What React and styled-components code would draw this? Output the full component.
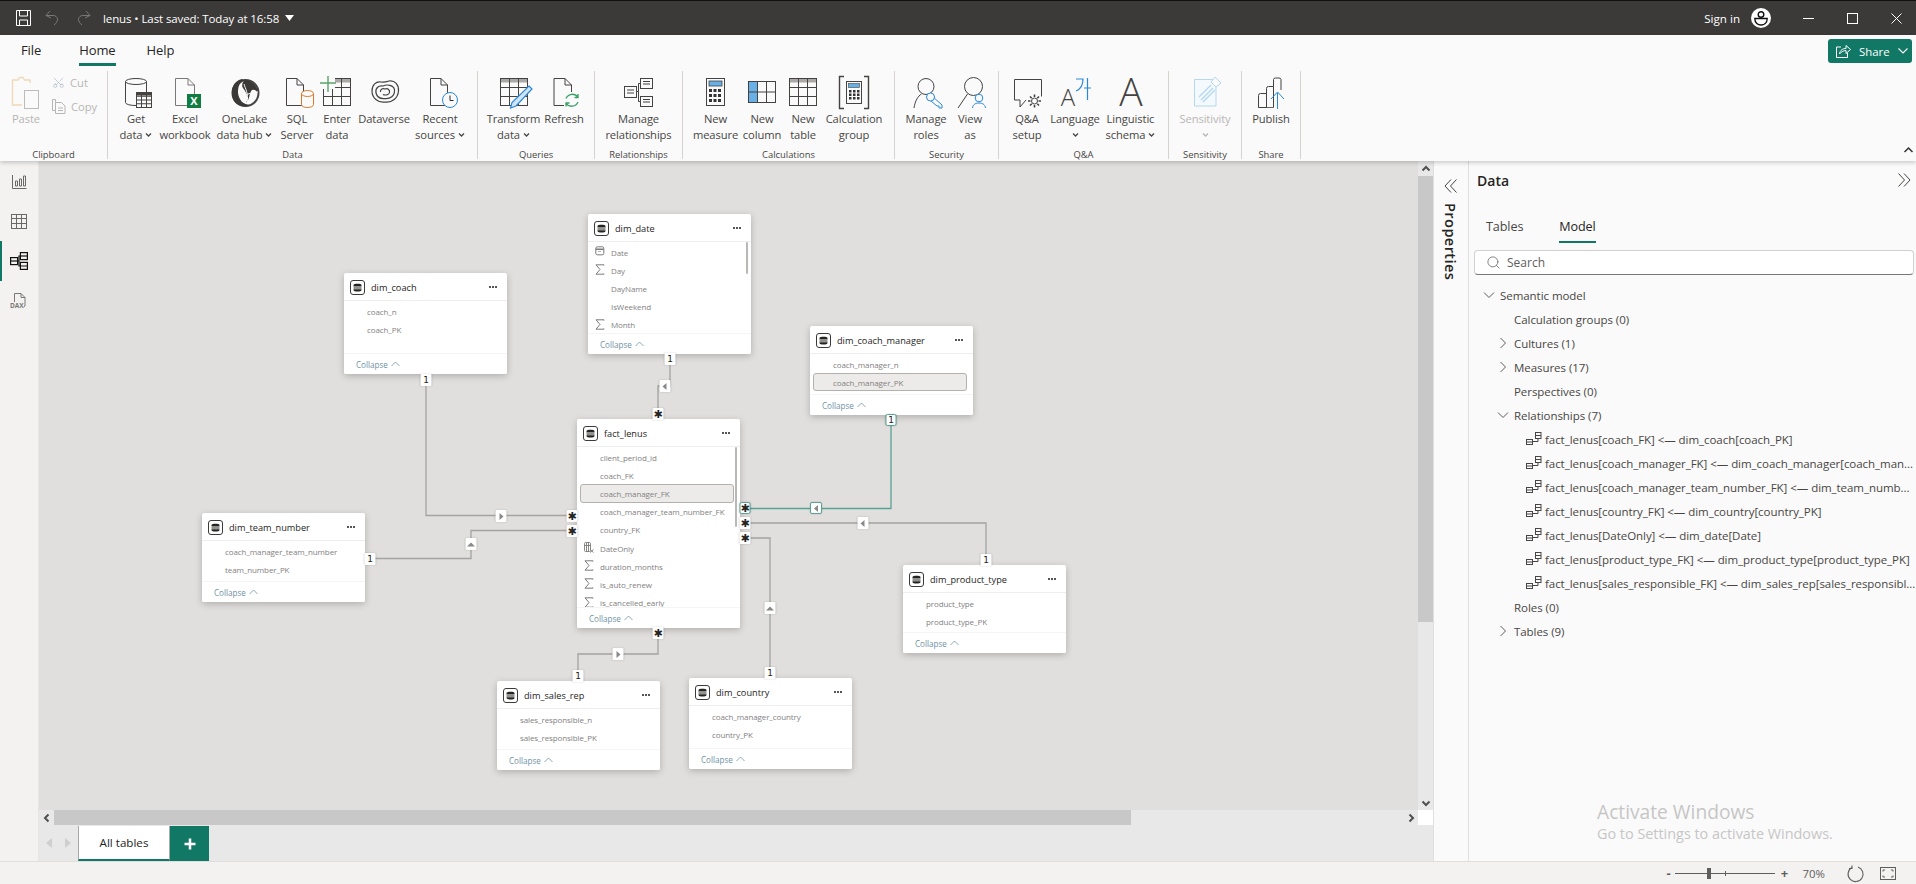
import React from 'react';
import styled, { createGlobalStyle } from 'styled-components';
import { Scissors, Search } from 'lucide-react';

const FONT = '"Open Sans", "Noto Sans", "Liberation Sans", sans-serif';
const GREEN = '#117865';
const ORIGIN_X = 39;
const ORIGIN_Y = 161;

const Global = createGlobalStyle`
  html, body { margin: 0; padding: 0; background: #fafafa; overflow: hidden; }
  * { box-sizing: border-box; }
`;

const Page = styled.div`
  width: 1916px; height: 884px; display: flex; flex-direction: column;
  font-family: ${FONT}; color: #252423; overflow: hidden; position: relative;
`;

/* title bar */
const TitleBar = styled.header`
  height: 35px; flex: none; background: #3b3a39; border-top: 1px solid #111;
  display: flex; align-items: center; color: #fff; padding-left: 15px;
`;
const TitleIcon = styled.span`
  display: flex; width: ${p => p.$w}px; justify-content: center;
`;
const DocTitle = styled.span`
  font-size: 11.5px; margin-left: 11px; white-space: nowrap; letter-spacing: -0.1px;
`;
const TitleRight = styled.div`
  margin-left: auto; margin-right: -2px; display: flex; align-items: center;
`;
const SignIn = styled.span`
  font-size: 11.6px; margin-right: 11px;
`;
const WinBtn = styled.span`
  width: 44px; display: flex; justify-content: center;
`;

/* ribbon */
const Ribbon = styled.section`
  height: 126px; flex: none; background: #fafafa; position: relative; z-index: 5;
  box-shadow: 0 2px 4px rgba(0,0,0,.18);
`;
const TabRow = styled.nav`
  height: 36px; display: flex; padding-left: 21px;
`;
const RibbonTab = styled.span`
  height: 31px; line-height: 31px; font-size: 13px; margin-right: ${p => p.$gap}px;
  color: #252423; border-bottom: ${p => (p.$active ? `3px solid ${GREEN}` : 'none')};
  letter-spacing: -0.1px;
`;
const ShareBtn = styled.span`
  position: absolute; left: 1828px; top: 4px; width: 84px; height: 24px; background: ${GREEN};
  border-radius: 3px; color: #fff; display: flex; align-items: center; font-size: 11.4px;
  padding-left: 8px; gap: 8px;
`;
const RibbonCollapse = styled.span`
  position: absolute; left: 1904px; top: 112px; display: flex;
`;
const Toolbar = styled.div`
  display: flex; height: 88px;
`;
const Group = styled.div`
  width: ${p => p.$w}px; flex: none; border-right: 1px solid #d4d3d1; display: flex; flex-direction: column;
  padding-left: ${p => p.$pad || 0}px;
`;
const GroupBody = styled.div`
  flex: 1; display: flex; min-height: 0;
`;
const GroupLabel = styled.div`
  height: 10px; line-height: 12px; font-size: 9.4px; text-align: center; color: #484644; white-space: nowrap;
  margin-left: ${p => -(p.$pad || 0)}px;
`;
const RButton = styled.div`
  width: ${p => p.$w}px; flex: none; display: flex; flex-direction: column; align-items: center;
  color: ${p => (p.$off ? '#b8b6b4' : '#484644')};
`;
const IconBox = styled.div`
  height: 40px; flex: none; padding-top: 5px; display: flex; justify-content: center;
`;
const RLabel = styled.div`
  font-size: 11.2px; line-height: 16px; text-align: center; white-space: nowrap; letter-spacing: -0.1px;
  display: flex; align-items: center; justify-content: center; gap: 3px; height: 16px;
`;
const SmallCol = styled.div`
  display: flex; flex-direction: column; padding-top: 3px; gap: 8px; margin-left: 0;
`;
const SmallBtn = styled.div`
  display: flex; align-items: center; gap: 5px; font-size: 11.2px; color: #b8b6b4; height: 16px;
`;

/* body */
const Body = styled.main`
  flex: 1; display: flex; min-height: 0;
`;
const LeftNav = styled.aside`
  width: 39px; flex: none; background: #f3f2f1; border-right: 1px solid #e6e5e3;
  display: flex; flex-direction: column;
`;
const NavItem = styled.div`
  height: 40px; display: flex; align-items: center; justify-content: center;
  border-left: 2px solid ${p => (p.$active ? GREEN : 'transparent')}; padding-right: 2px;
`;
const CenterCol = styled.div`
  width: 1394px; flex: none; display: flex; flex-direction: column;
`;
const CanvasRow = styled.div`
  height: 649px; flex: none; display: flex;
`;
const Canvas = styled.div`
  flex: 1; background: #e0dfdd; position: relative; overflow: hidden;
`;
const Links = styled.svg`
  position: absolute; left: 0; top: 0; width: 1378px; height: 649px;
`;
const VScroll = styled.div`
  width: 15px; flex: none; background: #e8e8e8; display: flex; flex-direction: column; align-items: center;
`;
const VBtn = styled.div`
  height: 15px; flex: none; display: flex; align-items: center; justify-content: center;
`;
const VThumb = styled.div`
  height: 446px; width: 100%; background: #c8c8c8; flex: none;
`;
const Spring = styled.div`
  flex: 1;
`;
const HScroll = styled.div`
  height: 15px; flex: none; display: flex; background: #e8e8e8;
`;
const HBtn = styled.div`
  width: 15px; flex: none; display: flex; align-items: center; justify-content: center;
  background: ${p => p.$bg || 'transparent'};
`;
const HThumb = styled.div`
  width: 1077px; background: #c8c8c8; flex: none;
`;
const TabBar = styled.div`
  height: 36px; flex: none; background: #e8e8e8; display: flex; align-items: stretch;
`;
const PagerArrows = styled.div`
  width: 39px; display: flex; align-items: center; justify-content: space-around; padding: 0 2px;
`;
const PageTab = styled.div`
  width: 92px; background: #fff; border-left: 1px solid #a8a8a8; border-right: 1px solid #a8a8a8;
  border-bottom: 2px solid ${GREEN}; font-size: 11.6px; display: flex; align-items: center; justify-content: center;
  margin-top: 1px;
`;
const AddTab = styled.div`
  width: 39px; background: ${GREEN}; display: flex; align-items: center; justify-content: center; margin-top: 1px;
`;

/* properties */
const PropsPane = styled.aside`
  width: 35px; flex: none; background: #fafafa; border-left: 1px solid #e1dfdd;
  display: flex; flex-direction: column; align-items: center; padding-top: 18px;
`;
const PropsTitle = styled.div`
  writing-mode: vertical-rl; font-size: 14.6px; font-weight: 600; color: #252423; margin-top: 10px; letter-spacing: 0.4px;
`;

/* data pane */
const DataPane = styled.aside`
  flex: 1; background: #fafafa; border-left: 1px solid #e1dfdd; position: relative; min-width: 0;
`;
const DataHead = styled.div`
  height: 40px; display: flex; align-items: center; justify-content: space-between; padding: 0 5px 2px 8px;
`;
const DataTitle = styled.h2`
  margin: 0; font-size: 14px; font-weight: 600; color: #252423;
`;
const PaneTabs = styled.div`
  height: 42px; display: flex; align-items: flex-end; padding-left: 17px; gap: 36px;
`;
const PaneTab = styled.span`
  font-size: 12.6px; height: 34px; line-height: 35px; letter-spacing: -0.1px;
  color: ${p => (p.$active ? '#252423' : '#484644')};
  border-bottom: ${p => (p.$active ? `2px solid ${GREEN}` : 'none')};
  font-weight: ${p => (p.$active ? 500 : 400)};
`;
const SearchBox = styled.div`
  margin: 7px 2px 0 5px; height: 25px; background: #fff; border: 1px solid #d1d0ce; border-bottom-color: #777;
  border-radius: 4px; display: flex; align-items: center; padding-left: 11px; gap: 6px;
  font-size: 12px; color: #605e5c;
`;
const Tree = styled.ul`
  list-style: none; margin: 8px 0 0; padding: 0;
`;
const TreeRow = styled.li`
  height: 24px; display: flex; align-items: center; white-space: nowrap; position: relative;
  padding-left: ${p => p.$indent}px; font-size: 11.5px; color: #484644; letter-spacing: -0.05px;
`;
const TreeChevron = styled.span`
  width: 17px; flex: none; display: flex; margin-left: -17px;
`;
const RelIcon = styled.span`
  display: flex; width: 19px; margin-left: -19px; flex: none;
`;
const Watermark = styled.div`
  position: absolute; left: 128px; top: 639px; color: #c6c6c6; pointer-events: none; white-space: nowrap;
`;
const WmBig = styled.div`
  font-size: 19.2px; line-height: 24px;
`;
const WmSmall = styled.div`
  font-size: 14.4px; line-height: 20px;
`;

/* status bar */
const StatusBar = styled.footer`
  height: 23px; flex: none; background: #f3f2f1; border-top: 1px solid #e1dfdd; position: relative;
  display: flex; align-items: center; justify-content: flex-end; padding-right: 20px; color: #605e5c;
`;
const ZoomTrack = styled.div`
  width: 100px; height: 1px; background: #605e5c; position: relative; margin: 0 6px 0 2px;
`;
const ZoomHandle = styled.span`
  position: absolute; left: 32px; top: -5px; width: 4px; height: 11px; background: #605e5c;
`;
const ZoomTick = styled.span`
  position: absolute; left: 50px; top: -2px; width: 1px; height: 5px; background: #605e5c;
`;
const ZoomSign = styled.span`
  font-size: 13px; width: 8px; text-align: center; font-weight: 700;
`;
const ZoomValue = styled.span`
  font-size: 11.4px; margin: 0 22px 0 14px;
`;

/* table cards */
const Card = styled.article`
  position: absolute; left: ${p => p.$x - ORIGIN_X}px; top: ${p => p.$y - ORIGIN_Y}px;
  width: 163px; height: ${p => p.$h}px; background: #fff; border-radius: 2px;
  box-shadow: 0 2px 7px rgba(0,0,0,.22); display: flex; flex-direction: column; overflow: hidden;
`;
const CardHead = styled.div`
  height: 28px; flex: none; display: flex; align-items: center; padding: 1px 8px 0 6px; gap: 6px;
  border-bottom: 1px solid #eeeeee;
`;
const CardIcon = styled.span`
  width: 15px; height: 15px; border: 1px solid #3b3a39; border-radius: 3px; flex: none;
  display: flex; align-items: center; justify-content: center;
`;
const CardTitle = styled.span`
  font-size: 9.2px; color: #252423; flex: 1; white-space: nowrap;
`;
const Dots = styled.span`
  display: flex; gap: 1.5px; margin-right: 2px;
`;
const Dot = styled.i`
  width: 1.6px; height: 1.6px; background: #333; border-radius: 50%;
`;
const Fields = styled.div`
  flex: 1; min-height: 0; overflow: hidden; padding-top: 1px;
`;
const Field = styled.div`
  height: 18.2px; display: flex; align-items: center; white-space: nowrap; font-size: 8px; letter-spacing: -0.1px; color: #83817f;
  position: relative;
  margin: ${p => (p.$selected ? '0 6px 0 3px' : '0')};
  padding-left: ${p => (p.$selected ? 19 : 23)}px;
  ${p => p.$selected && 'background: #ecebe9; border: 1px solid #b3b1ad; border-radius: 3px;'}
`;
const FieldIcon = styled.span`
  position: absolute; left: 7px; top: 3px; display: flex;
`;
const CardFoot = styled.div`
  height: 21px; flex: none; background: #fff; border-top: 1px solid #f5f5f5; display: flex; align-items: center;
  padding-left: 12px; gap: 3px; font-size: 8.1px; color: #7092a6;
`;
const CardThumb = styled.span`
  position: absolute; right: 3px; top: 28px; width: 2.5px; height: ${p => p.$h}px; background: #b9b8b6; border-radius: 2px;
`;
const Tag = styled.span`
  position: absolute; left: ${p => p.$x - ORIGIN_X}px; top: ${p => p.$y - ORIGIN_Y}px;
  transform: translate(-50%, -50%); width: ${p => p.$w || 11}px; height: 12px; background: #fff;
  display: flex; align-items: center; justify-content: center; font-size: ${p => p.$fs || 9}px; line-height: 1;
  color: #252423; font-family: "DejaVu Sans", sans-serif;
  box-shadow: 0 0 2px rgba(0,0,0,.18); border-radius: 1px;
  ${p => p.$hot && 'border: 1px solid #58a394; border-radius: 2px;'}
`;
const Svg = styled.svg`
  display: block; flex: none; overflow: visible;
`;

/* ---------- drawings ---------- */
const S = '#444342';
const I = ({ children }) => (
  <Svg width="40" height="34" viewBox="0 0 40 34" fill="none" stroke={S} strokeWidth="1">{children}</Svg>
);
const Grid = ({ x, y, w, h, cols, rows, c = S }) => {
  const l = [];
  for (let i = 1; i < cols; i++) l.push(<path key={'c' + i} d={`M${x + (w * i) / cols} ${y}V${y + h}`} stroke={c} />);
  for (let i = 1; i < rows; i++) l.push(<path key={'r' + i} d={`M${x} ${y + (h * i) / rows}H${x + w}`} stroke={c} />);
  return <>{l}<rect x={x} y={y} width={w} height={h} stroke={c} /></>;
};
const Doc = ({ x, y = 2, w = 18, h = 28, c = S }) => (
  <path d={`M${x + .5} ${y + .5}H${x + w - 7}L${x + w - .5} ${y + 7}V${y + h - .5}H${x + .5}ZM${x + w - 7} ${y + .5}V${y + 7}H${x + w - .5}`} stroke={c} />
);
const Cyl = ({ x, y, w, h, c = S, fill = '#fafafa' }) => (
  <>
    <path d={`M${x} ${y + 3}V${y + h - 3}C${x} ${y + h + 1} ${x + w} ${y + h + 1} ${x + w} ${y + h - 3}V${y + 3}`} stroke={c} fill={fill} />
    <ellipse cx={x + w / 2} cy={y + 3} rx={w / 2} ry="3" stroke={c} fill={fill} />
  </>
);

const icons = {
  paste: (
    <I>
      <path d="M24 7V4H18.500L17 1.500H13.500L12 4H6.500V29H16" stroke="#efd9b9" strokeWidth="1.4" />
      <rect x="18.500" y="14.500" width="14" height="18" stroke="#bdbcba" />
    </I>
  ),
  get: (
    <I>
      <Cyl x={9.5} y={2.5} w={21} h={27} />
      <rect x="20" y="16" width="16" height="16" fill="#fafafa" stroke="none" />
      <rect x="20.5" y="16.5" width="15" height="3" fill={S} stroke="none" />
      <Grid x={20.5} y={16.5} w={15} h={15} cols={3} rows={4} />
    </I>
  ),
  excel: (
    <I>
      <Doc x={10} w={20} c="#7a7977" />
      <rect x="22" y="18" width="14" height="14" fill="#107c41" stroke="none" />
      <text x="29" y="29" textAnchor="middle" fontSize="11" fontWeight="700" fill="#fff" stroke="none" fontFamily={FONT}>X</text>
    </I>
  ),
  onelake: (
    <I>
      <circle cx="20.5" cy="17" r="13" fill="#fafafa" stroke={S} strokeWidth="2" />
      <path d="M17 3C8 5 5 14 8 23C11 30 20 32 26 29C18 29 14 24 13 17C13 11 14 7 19 5Z" fill="#3a3938" stroke="none" />
      <path d="M20 4C27 4 33 11 33 17C31 14 29 13 27 14C24 17 25 23 21 27C24 21 21 16 18 12C16 9 18 5 20 4Z" fill="#3a3938" stroke="none" />
      <path d="M19 8C20 12 24 18 22 27M14 18C18 21 27 16 33 16" stroke="#fafafa" strokeWidth="1" />
    </I>
  ),
  sql: (
    <I>
      <Doc x={9} w={18} />
      <Cyl x={24.5} y={14.5} w={12} h={17} c="#d9782a" />
    </I>
  ),
  enter: (
    <I>
      <rect x="6.5" y="2.5" width="27" height="4" fill="#a9a8a6" stroke="none" />
      <Grid x={6.5} y={2.5} w={27} h={27} cols={3} rows={3} />
      <rect x="3" y="0" width="15" height="13" fill="#fafafa" stroke="none" />
      <path d="M11 0V16M3 7H19" stroke="#5aa36b" strokeWidth="1.4" />
    </I>
  ),
  dataverse: (
    <I>
      <path d="M8 15C8 9 12 5 17 6C20 6.500 22 6 25 5C31 4 35 9 34.500 15C34 22 28 27 21 26C14 27 8 22 8 15Z" strokeWidth="1.2" />
      <path d="M12 17C11 12 15 9 19 10C23 8 30 9 30.500 14C31 20 26 23 21 22.500C16 23 13 21 12 17Z" strokeWidth="1.2" />
      <path d="M16.500 16C16 13 19 12 21 13C24 12 26 14 25.500 16.500C25 19 21 19.500 19 18.500" strokeWidth="1.2" />
    </I>
  ),
  recent: (
    <I>
      <Doc x={10} w={18} />
      <circle cx="30" cy="24" r="7.500" fill="#fafafa" stroke="#2b88d8" />
      <path d="M30 19.500V24.500H33.500" stroke="#2b2b2b" />
    </I>
  ),
  transform: (
    <I>
      <rect x="6.5" y="2.5" width="27" height="4" fill="#a9a8a6" stroke="none" />
      <Grid x={6.5} y={2.5} w={27} h={27} cols={3} rows={3} />
      <path d="M35 10L38 13L22 30L16.500 32L18 26.500Z" fill="#cfe4f6" stroke="#2b88d8" strokeWidth="1.2" />
    </I>
  ),
  refresh: (
    <I>
      <Doc x={9.5} w={18.5} />
      <rect x="20" y="16" width="16" height="16" fill="#fafafa" stroke="none" />
      <path d="M22 22.500A7 7 0 0 1 34 21M34 18V21.500H30.500" stroke="#3aa06a" strokeWidth="1.3" />
      <path d="M34 26A7 7 0 0 1 22 27.500M22 30.500V27H25.500" stroke="#3aa06a" strokeWidth="1.3" />
    </I>
  ),
  rel: (
    <I>
      <rect x="21.5" y="2.5" width="12" height="10" />
      <rect x="21.5" y="20.5" width="12" height="10" />
      <rect x="5.5" y="10.5" width="12" height="11" />
      <path d="M17.500 15.500H19.500V7.500H21.500M19.500 15.500V25.500H21.500M24 5.500H31M24 8H31M24 23.500H31M24 26H31M8 14H15M8 17H15" />
    </I>
  ),
  measure: (
    <I>
      <rect x="10.5" y="2.5" width="18" height="27" />
      <rect x="13" y="5" width="13" height="5" fill="#69b0e6" stroke={S} strokeWidth=".8" />
      {[13, 18, 23].map(y => [13, 17.5, 22].map(x => <rect key={x + '-' + y} x={x} y={y} width="3" height="3" fill="#333" stroke="none" />))}
    </I>
  ),
  column: (
    <I>
      <rect x="6.500" y="5.500" width="9" height="21" fill="#69b0e6" stroke="none" />
      <Grid x={6.5} y={5.5} w={27} h={21} cols={3} rows={2} />
    </I>
  ),
  table: (
    <I>
      <rect x="6.5" y="2.5" width="27" height="4" fill="#a9a8a6" stroke="none" />
      <Grid x={6.5} y={2.5} w={27} h={27} cols={3} rows={3} />
    </I>
  ),
  calc: (
    <I>
      <path d="M10 .5H5.500V32.500H10M30 .5H34.500V32.500H30" strokeWidth="1.4" />
      <rect x="12.500" y="5.500" width="15" height="22" />
      <rect x="14.500" y="7.500" width="11" height="4" fill="#69b0e6" stroke={S} strokeWidth=".6" />
      {[14, 17.5, 21].map(y => [15, 19, 23].map(x => <rect key={x + '-' + y} x={x} y={y} width="2.500" height="2.500" fill="#333" stroke="none" />))}
    </I>
  ),
  roles: (
    <I>
      <circle cx="20" cy="10.500" r="8" />
      <path d="M8 32C9 25 12 20 15.500 18" />
      <path d="M26 20L36 29V32H33V30H31L25 25" stroke="#2b88d8" fill="#fafafa" />
      <circle cx="24.500" cy="21" r="4" stroke="#2b88d8" fill="#fafafa" />
    </I>
  ),
  viewas: (
    <I>
      <circle cx="23.500" cy="10.500" r="9" />
      <path d="M8 32L17.500 18" />
      <circle cx="29" cy="22" r="3.800" stroke="#2b88d8" fill="#fafafa" />
      <path d="M22.500 32C23 28 26 27 29 27C32 27 35 28 35.500 32" stroke="#2b88d8" />
    </I>
  ),
  qa: (
    <I>
      <path d="M7.500 3.500H34.500V24H19L13 31V24H7.500Z" fill="#fafafa" />
      <circle cx="27.500" cy="25" r="7.500" fill="#fafafa" stroke="#fafafa" strokeWidth="2" />
      <circle cx="27.500" cy="25" r="3" />
      <path d="M27.500 18.500V21M27.500 29V31.500M21 25H23.500M31.500 25H34M23 20.500L24.700 22.200M30.300 27.800L32 29.500M32 20.500L30.300 22.200M24.700 27.800L23 29.500" strokeWidth="1.6" />
    </I>
  ),
  language: (
    <I>
      <text x="13" y="30" textAnchor="middle" fontSize="24" fill={S} stroke="none" fontFamily={FONT} fontWeight="300">A</text>
      <path d="M21 3H28C28 9 26 13 21 15M32.500 2V24M29 12H36" stroke="#2b88d8" strokeWidth="1.2" />
    </I>
  ),
  linguistic: (
    <I>
      <text x="20" y="30" textAnchor="middle" fontSize="39" fill={S} stroke="none" fontFamily={FONT} fontWeight="300">A</text>
    </I>
  ),
  sensitivity: (
    <I>
      <path d="M9.500 3.500H31V30H9.500Z" stroke="#b5d8ee" fill="#f3f9fd" />
      <path d="M14 21L26 9M16 24L28 12M18 26L30 14" stroke="#b5d8ee" strokeWidth="1.4" />
      <path d="M26 6L30 1L36 7L31 11Z" fill="#fafafa" stroke="#b5d8ee" />
    </I>
  ),
  publish: (
    <I>
      <path d="M7.500 31.500V19.500Q7.500 17.500 9.500 17.500H15.500V31.500ZM15.500 31.500V12.500Q15.500 10.500 17.500 10.500H22.500V31.500M22.500 10.500V3.500Q22.500 2 24.500 2H28Q30 2 30 3.500V14" />
      <rect x="7.500" y="31" width="15" height=".8" fill={S} stroke="none" />
      <path d="M26.500 33V17M20 23L26.500 16L33 23" stroke="#2b88d8" fill="none" />
    </I>
  ),
};

const Caret = ({ c = '#484644', size = 6 }) => (
  <Svg width={size + 1} height={size} viewBox="0 0 7 6" fill="none" stroke={c} strokeWidth="1.3">
    <path d="M1 1.500L3.500 4L6 1.500" />
  </Svg>
);

const Chev = ({ dir }) => (
  <Svg width="12" height="12" viewBox="0 0 12 12" fill="none" stroke="#605e5c" strokeWidth="1">
    <path d={dir === 'down' ? 'M1 3.500L6 8.500L11 3.500' : 'M3.500 1L8.500 6L3.500 11'} />
  </Svg>
);

const Arrow = ({ dir }) => {
  const d = { left: 'M7 2L3 5.500L7 9Z', right: 'M4 2L8 5.500L4 9Z', up: 'M1.500 7.500L5.500 3.500L9.500 7.500Z' }[dir];
  return <Svg width="11" height="11" viewBox="0 0 11 11"><path d={d} fill="#8a8987" /></Svg>;
};
const ScrollArrow = ({ dir }) => {
  const d = {
    up: 'M1.500 6.500L5 3L8.500 6.500', down: 'M1.500 3.500L5 7L8.500 3.500',
    left: 'M6.500 1.500L3 5L6.500 8.500', right: 'M3.500 1.500L7 5L3.500 8.500',
  }[dir];
  return <Svg width="10" height="10" viewBox="0 0 10 10" fill="none" stroke="#505050" strokeWidth="2"><path d={d} /></Svg>;
};

const DbGlyph = () => (
  <Svg width="9" height="9" viewBox="0 0 9 9">
    <path d="M.5 2C.5 .2 8.500 .2 8.500 2V3.600H.5ZM.5 4.400H8.500V5.500H.5ZM.5 6.300H8.500V7C8.500 9 .5 9 .5 7Z" fill="#252423" />
  </Svg>
);
const Sigma = () => (
  <Svg width="10" height="11" viewBox="0 0 10 11" fill="none" stroke="#7d7b79" strokeWidth="1">
    <path d="M9 1.500V.8H1L5 5.500L1 10.200H9V9.500" />
  </Svg>
);
const CalIcon = () => (
  <Svg width="10" height="10" viewBox="0 0 10 10" fill="none" stroke="#7d7b79" strokeWidth="1">
    <rect x=".8" y=".8" width="8" height="8" rx="1.500" /><path d="M.8 3.300H8.800" strokeWidth="1.500" /><path d="M3 5.500H6" strokeWidth=".6" />
  </Svg>
);
const CalcIcon = () => (
  <Svg width="10" height="11" viewBox="0 0 10 11" fill="none" stroke="#7d7b79" strokeWidth=".9">
    <rect x=".5" y=".5" width="6" height="9" rx="1" /><path d="M2.500 .5V9.500M4.500 .5V9.500M.5 3.500H6.500" /><path d="M6 7.500L9.500 10.500M9.500 7.500L6 10.500" />
  </Svg>
);
const FieldGlyph = { sum: <Sigma />, cal: <CalIcon />, calc: <CalcIcon /> };

const RelGlyph = () => (
  <Svg width="16" height="14" viewBox="0 0 16 14" fill="none" stroke="#484644" strokeWidth="1">
    <rect x=".5" y="7.500" width="6" height="5" /><path d="M.5 10H6.500" />
    <rect x="9.500" y=".5" width="5.500" height="6" /><path d="M9.500 3.500H15M12 6.500V9.500H6.500" />
  </Svg>
);

/* ---------- data ---------- */
const groups = [
  { name: 'Data', w: 370, pad: 3, items: [
    { w: 50, icon: 'get', l: ['Get', 'data'], caret: true },
    { w: 48, icon: 'excel', l: ['Excel', 'workbook'] },
    { w: 71, icon: 'onelake', l: ['OneLake', 'data hub'], caret: true },
    { w: 34, icon: 'sql', l: ['SQL', 'Server'] },
    { w: 46, icon: 'enter', l: ['Enter', 'data'] },
    { w: 48, icon: 'dataverse', l: ['Dataverse'] },
    { w: 64, icon: 'recent', l: ['Recent', 'sources'], caret: true },
  ] },
  { name: 'Queries', w: 117, pad: 6, items: [
    { w: 59, icon: 'transform', l: ['Transform', 'data'], caret: true },
    { w: 42, icon: 'refresh', l: ['Refresh'] },
  ] },
  { name: 'Relationships', w: 88, items: [{ w: 87, icon: 'rel', l: ['Manage', 'relationships'] }] },
  { name: 'Calculations', w: 212, pad: 6, items: [
    { w: 53, icon: 'measure', l: ['New', 'measure'] },
    { w: 40, icon: 'column', l: ['New', 'column'] },
    { w: 42, icon: 'table', l: ['New', 'table'] },
    { w: 60, icon: 'calc', l: ['Calculation', 'group'] },
  ] },
  { name: 'Security', w: 104, pad: 5, items: [
    { w: 52, icon: 'roles', l: ['Manage', 'roles'] },
    { w: 36, icon: 'viewas', l: ['View', 'as'] },
  ] },
  { name: 'Q&A', w: 170, pad: 6, items: [
    { w: 44, icon: 'qa', l: ['Q&A', 'setup'] },
    { w: 52, icon: 'language', l: ['Language', ''], caret: true },
    { w: 59, icon: 'linguistic', l: ['Linguistic', 'schema'], caret: true },
  ] },
  { name: 'Sensitivity', w: 73, items: [{ w: 72, icon: 'sensitivity', l: ['Sensitivity', ''], caret: true, off: true }] },
  { name: 'Share', w: 59, items: [{ w: 58, icon: 'publish', l: ['Publish'] }] },
];

const f = (name, glyph) => ({ name, glyph });
const cards = [
  { name: 'dim_date', x: 588, y: 214, h: 140, thumb: 32, fields: [f('Date', 'cal'), f('Day', 'sum'), f('DayName'), f('IsWeekend'), f('Month', 'sum')] },
  { name: 'dim_coach', x: 344, y: 273, h: 101, fields: [f('coach_n'), f('coach_PK')] },
  { name: 'dim_coach_manager', x: 810, y: 326, h: 89, fields: [f('coach_manager_n'), { name: 'coach_manager_PK', selected: true }] },
  { name: 'fact_lenus', x: 577, y: 419, h: 209, thumb: 80, fields: [
    f('client_period_id'), f('coach_FK'), { name: 'coach_manager_FK', selected: true }, f('coach_manager_team_number_FK'), f('country_FK'),
    f('DateOnly', 'calc'), f('duration_months', 'sum'), f('is_auto_renew', 'sum'), f('is_cancelled_early', 'sum'),
  ] },
  { name: 'dim_team_number', x: 202, y: 513, h: 89, fields: [f('coach_manager_team_number'), f('team_number_PK')] },
  { name: 'dim_product_type', x: 903, y: 565, h: 88, fields: [f('product_type'), f('product_type_PK')] },
  { name: 'dim_country', x: 689, y: 678, h: 91, fields: [f('coach_manager_country'), f('country_PK')] },
  { name: 'dim_sales_rep', x: 497, y: 681, h: 89, fields: [f('sales_responsible_n'), f('sales_responsible_PK')] },
];

const links = [
  'M426 374V515.500H567', 'M365 558.500H471V530.500H567', 'M670 354V386H658V419',
  'M740 523H986V565', 'M740 538H770V678', 'M658 628V654H578V681',
];
const numTags = [[426, 380], [670, 359], [370, 559], [986, 560], [770, 673], [578, 676]];
const starTags = [[572, 516], [572, 531], [658, 414], [745, 523], [745, 538], [658, 633]];
const arrowTags = [[501, 516, 'right'], [471, 544, 'up'], [664.5, 386, 'left'], [862.5, 523, 'left'], [770, 608, 'up'], [618, 654, 'right']];

const tree = [
  { t: 'Semantic model', i: 31, c: 'down' },
  { t: 'Calculation groups (0)', i: 45 },
  { t: 'Cultures (1)', i: 45, c: 'right' },
  { t: 'Measures (17)', i: 45, c: 'right' },
  { t: 'Perspectives (0)', i: 45 },
  { t: 'Relationships (7)', i: 45, c: 'down' },
  { t: 'fact_lenus[coach_FK] <— dim_coach[coach_PK]', i: 76, rel: true },
  { t: 'fact_lenus[coach_manager_FK] <— dim_coach_manager[coach_man...', i: 76, rel: true },
  { t: 'fact_lenus[coach_manager_team_number_FK] <— dim_team_numb...', i: 76, rel: true },
  { t: 'fact_lenus[country_FK] <— dim_country[country_PK]', i: 76, rel: true },
  { t: 'fact_lenus[DateOnly] <— dim_date[Date]', i: 76, rel: true },
  { t: 'fact_lenus[product_type_FK] <— dim_product_type[product_type_PK]', i: 76, rel: true },
  { t: 'fact_lenus[sales_responsible_FK] <— dim_sales_rep[sales_responsibl...', i: 76, rel: true },
  { t: 'Roles (0)', i: 45 },
  { t: 'Tables (9)', i: 45, c: 'right' },
];

const TableCard = ({ c }) => (
  <Card $x={c.x} $y={c.y} $h={c.h}>
    <CardHead>
      <CardIcon><DbGlyph /></CardIcon>
      <CardTitle>{c.name}</CardTitle>
      <Dots><Dot /><Dot /><Dot /></Dots>
    </CardHead>
    <Fields>
      {c.fields.map(x => (
        <Field key={x.name} $selected={x.selected}>
          {x.glyph && <FieldIcon>{FieldGlyph[x.glyph]}</FieldIcon>}
          {x.name}
        </Field>
      ))}
    </Fields>
    <CardFoot>
      Collapse
      <Svg width="9" height="6" viewBox="0 0 9 6" fill="none" stroke="#7092a6" strokeWidth=".8"><path d="M.5 5L4.500 1L8.500 5" /></Svg>
    </CardFoot>
    {c.thumb && <CardThumb $h={c.thumb} />}
  </Card>
);

const RibbonBtn = ({ b }) => (
  <RButton $w={b.w} $off={b.off}>
    <IconBox>{icons[b.icon]}</IconBox>
    {b.l.map((line, i) => (
      <RLabel key={i}>
        {line}
        {b.caret && i === b.l.length - 1 && <Caret c={b.off ? '#b8b6b4' : '#484644'} />}
      </RLabel>
    ))}
  </RButton>
);

export default function App() {
  return (
    <Page>
      <Global />
      <TitleBar>
        <TitleIcon $w={16}>
          <Svg width="15" height="16" viewBox="0 0 15 16" fill="none" stroke="#fff" strokeWidth="1">
            <path d="M.5 .5H14.500V15.500H.5ZM3.500 .5V6H11.500V.5M3.500 15.500V10H11.500V15.500" />
          </Svg>
        </TitleIcon>
        <TitleIcon $w={43}>
          <Svg width="15" height="16" viewBox="0 0 15 16" fill="none" stroke="#7a7977" strokeWidth="1">
            <path d="M1 5.500L5 1M1 5.500L6 8M1 5.500H8C13 5.500 14.500 11 9 15" />
          </Svg>
        </TitleIcon>
        <TitleIcon $w={18}>
          <Svg width="15" height="16" viewBox="0 0 15 16" fill="none" stroke="#7a7977" strokeWidth="1">
            <path d="M14 5.500L10 1M14 5.500L9 8M14 5.500H7C2 5.500 .5 11 6 15" />
          </Svg>
        </TitleIcon>
        <DocTitle>lenus • Last saved: Today at 16:58</DocTitle>
        <TitleIcon $w={20}>
          <Svg width="9" height="6" viewBox="0 0 9 6"><path d="M0 0H9L4.500 6Z" fill="#fff" /></Svg>
        </TitleIcon>
        <TitleRight>
          <SignIn>Sign in</SignIn>
          <Svg width="20" height="20" viewBox="0 0 20 20" style={{ marginRight: 15 }}>
            <circle cx="10" cy="10" r="10" fill="#fff" />
            <circle cx="10" cy="6.500" r="2.800" fill="none" stroke="#111" strokeWidth="1.400" />
            <path d="M3.800 10.500H16.200C16.200 15 13 17 10 17C7 17 3.800 15 3.800 10.500Z" fill="none" stroke="#111" strokeWidth="1.400" />
          </Svg>
          <WinBtn><Svg width="11" height="11" viewBox="0 0 11 11"><path d="M0 5.500H11" stroke="#fff" /></Svg></WinBtn>
          <WinBtn><Svg width="11" height="11" viewBox="0 0 11 11"><rect x=".5" y=".5" width="10" height="10" stroke="#fff" fill="none" /></Svg></WinBtn>
          <WinBtn><Svg width="11" height="11" viewBox="0 0 11 11"><path d="M.5 .5L10.500 10.500M10.500 .5L.5 10.500" stroke="#fff" /></Svg></WinBtn>
        </TitleRight>
      </TitleBar>

      <Ribbon>
        <TabRow>
          <RibbonTab $gap={38}>File</RibbonTab>
          <RibbonTab $gap={31} $active>Home</RibbonTab>
          <RibbonTab>Help</RibbonTab>
        </TabRow>
        <ShareBtn>
          <Svg width="15" height="14" viewBox="0 0 15 14" fill="none" stroke="#fff" strokeWidth="1">
            <path d="M5 3H.5V13.500H11.500V9" /><path d="M3.500 10C4 6 7 4.500 10 4.500V1.500L14.500 5.500L10 9.500V6.500C8 6.500 5.500 7.500 3.500 10Z" />
          </Svg>
          Share
          <Svg width="10" height="6" viewBox="0 0 10 6" fill="none" stroke="#fff" strokeWidth="1.100"><path d="M.5 .5L5 5L9.500 .5" /></Svg>
        </ShareBtn>
        <RibbonCollapse>
          <Svg width="9" height="6" viewBox="0 0 9 6" fill="none" stroke="#333" strokeWidth="1.500"><path d="M.5 5L4.500 1L8.500 5" /></Svg>
        </RibbonCollapse>
        <Toolbar>
          <Group $w={108}>
            <GroupBody>
              <RButton $w={52} $off>
                <IconBox>{icons.paste}</IconBox>
                <RLabel>Paste</RLabel>
              </RButton>
              <SmallCol>
                <SmallBtn><Scissors size={13} color="#a9b6c4" strokeWidth={1.2} style={{ transform: 'rotate(-90deg)' }} />Cut</SmallBtn>
                <SmallBtn>
                  <Svg width="14" height="15" viewBox="0 0 14 15" fill="none" stroke="#b8b6b4" strokeWidth="1"><path d="M3.500 3.500V.5H.5V11.500H3.500M3.500 3.500H9.500L13 7V14.500H3.500Z" /><path d="M6 9H11M6 11.500H11" /></Svg>
                  Copy
                </SmallBtn>
              </SmallCol>
            </GroupBody>
            <GroupLabel>Clipboard</GroupLabel>
          </Group>
          {groups.map(g => (
            <Group key={g.name} $w={g.w} $pad={g.pad}>
              <GroupBody>{g.items.map((b, i) => <RibbonBtn key={i} b={b} />)}</GroupBody>
              <GroupLabel $pad={g.pad}>{g.name}</GroupLabel>
            </Group>
          ))}
        </Toolbar>
      </Ribbon>

      <Body>
        <LeftNav>
          <NavItem>
            <Svg width="15" height="15" viewBox="0 0 15 15" fill="none" stroke="#6a6967" strokeWidth="1">
              <path d="M.5 1V14.500H14.500M3.500 7H5.500V12H3.500ZM7.500 5H9.500V12H7.500ZM11.500 2H13.500V12H11.500Z" />
            </Svg>
          </NavItem>
          <NavItem>
            <Svg width="16" height="15" viewBox="0 0 16 15" fill="none" stroke="#6a6967" strokeWidth="1">
              <rect x=".5" y=".5" width="15" height="14" /><path d="M.5 4.500H15.500M.5 9.500H15.500M5.500 .5V14.500M10.500 .5V14.500" />
            </Svg>
          </NavItem>
          <NavItem $active>
            <Svg width="18" height="18" viewBox="0 0 18 18" fill="none" stroke="#111" strokeWidth="1.200">
              <rect x=".6" y="5.600" width="7" height="7" /><path d="M.6 9H7.600" />
              <rect x="10.400" y=".6" width="7" height="7" /><path d="M10.400 4H17.400" />
              <rect x="10.400" y="10.400" width="7" height="7" /><path d="M10.400 14H17.400M7.600 9H9V4H10.400M9 9V14H10.400" />
            </Svg>
          </NavItem>
          <NavItem>
            <Svg width="18" height="16" viewBox="0 0 18 16" fill="none" stroke="#7a7977" strokeWidth="1">
              <path d="M4.500 9V.5H11L15 4.500V13L13.500 14M11 .5V4.500H15" />
              <text x="0" y="15" fontSize="6.500" fontWeight="700" fill="#7a7977" stroke="none" fontFamily={FONT}>DAX</text>
            </Svg>
          </NavItem>
        </LeftNav>

        <CenterCol>
          <CanvasRow>
            <Canvas>
              <Links viewBox={`${ORIGIN_X} ${ORIGIN_Y} 1378 649`} fill="none">
                {links.map(d => <path key={d} d={d} stroke="#a3a3a1" strokeWidth="1.300" />)}
                <path d="M891 415V508.500H745" stroke="#5aa394" strokeWidth="1.300" />
              </Links>
              {cards.map(c => <TableCard key={c.name} c={c} />)}
              {numTags.map(([x, y]) => <Tag key={`${x}-${y}`} $x={x} $y={y}>1</Tag>)}
              <Tag $x={891} $y={420} $hot>1</Tag>
              {starTags.map(([x, y]) => <Tag key={`${x}-${y}`} $x={x} $y={y} $fs={11}>✱</Tag>)}
              <Tag $x={745} $y={508} $fs={11} $hot>✱</Tag>
              {arrowTags.map(([x, y, d]) => <Tag key={`${x}-${y}`} $x={x} $y={y}><Arrow dir={d} /></Tag>)}
              <Tag $x={816} $y={508} $hot $w={12}><Arrow dir="left" /></Tag>
            </Canvas>
            <VScroll>
              <VBtn><ScrollArrow dir="up" /></VBtn>
              <VThumb />
              <Spring />
              <VBtn><ScrollArrow dir="down" /></VBtn>
            </VScroll>
          </CanvasRow>
          <HScroll>
            <HBtn><ScrollArrow dir="left" /></HBtn>
            <HThumb />
            <Spring />
            <HBtn><ScrollArrow dir="right" /></HBtn>
            <HBtn $bg="#fff" />
          </HScroll>
          <TabBar>
            <PagerArrows>
              <Svg width="7" height="10" viewBox="0 0 7 10"><path d="M6 0L0 5L6 10Z" fill="#cfcfcf" /></Svg>
              <Svg width="7" height="10" viewBox="0 0 7 10"><path d="M1 0L7 5L1 10Z" fill="#cfcfcf" /></Svg>
            </PagerArrows>
            <PageTab>All tables</PageTab>
            <AddTab>
              <Svg width="12" height="12" viewBox="0 0 12 12"><path d="M6 0.500V11.500M.5 6H11.500" stroke="#fff" strokeWidth="2.500" /></Svg>
            </AddTab>
          </TabBar>
        </CenterCol>

        <PropsPane>
          <Svg width="14" height="14" viewBox="0 0 14 14" fill="none" stroke="#484644" strokeWidth="1">
            <path d="M7 .5L1 7L7 13.500M12.500 .5L6.500 7L12.500 13.500" />
          </Svg>
          <PropsTitle>Properties</PropsTitle>
        </PropsPane>

        <DataPane>
          <DataHead>
            <DataTitle>Data</DataTitle>
            <Svg width="14" height="14" viewBox="0 0 14 14" fill="none" stroke="#484644" strokeWidth="1">
              <path d="M1.500 .5L7.500 7L1.500 13.500M7 .5L13 7L7 13.500" />
            </Svg>
          </DataHead>
          <PaneTabs>
            <PaneTab>Tables</PaneTab>
            <PaneTab $active>Model</PaneTab>
          </PaneTabs>
          <SearchBox>
            <Search size={15} color="#605e5c" strokeWidth={1.2} />
            Search
          </SearchBox>
          <Tree>
            {tree.map(r => (
              <TreeRow key={r.t} $indent={r.i}>
                {r.c && <TreeChevron><Chev dir={r.c} /></TreeChevron>}
                {r.rel && <RelIcon><RelGlyph /></RelIcon>}
                {r.t}
              </TreeRow>
            ))}
          </Tree>
          <Watermark>
            <WmBig>Activate Windows</WmBig>
            <WmSmall>Go to Settings to activate Windows.</WmSmall>
          </Watermark>
        </DataPane>
      </Body>

      <StatusBar>
        <ZoomSign>-</ZoomSign>
        <ZoomTrack><ZoomHandle /><ZoomTick /></ZoomTrack>
        <ZoomSign>+</ZoomSign>
        <ZoomValue>70%</ZoomValue>
        <Svg width="17" height="17" viewBox="0 0 17 17" fill="none" stroke="#605e5c" strokeWidth="1.100" style={{ marginRight: 16 }}>
          <path d="M5 2.500A7.500 7.500 0 1 0 11 2M5 .5V3.500H2" />
        </Svg>
        <Svg width="16" height="13" viewBox="0 0 16 13" fill="none" stroke="#605e5c" strokeWidth="1">
          <rect x=".5" y=".5" width="15" height="12" /><path d="M3 4.500V3H5M11 3H13V4.500M3 8.500V10H5M11 10H13V8.500" />
        </Svg>
      </StatusBar>
    </Page>
  );
}
